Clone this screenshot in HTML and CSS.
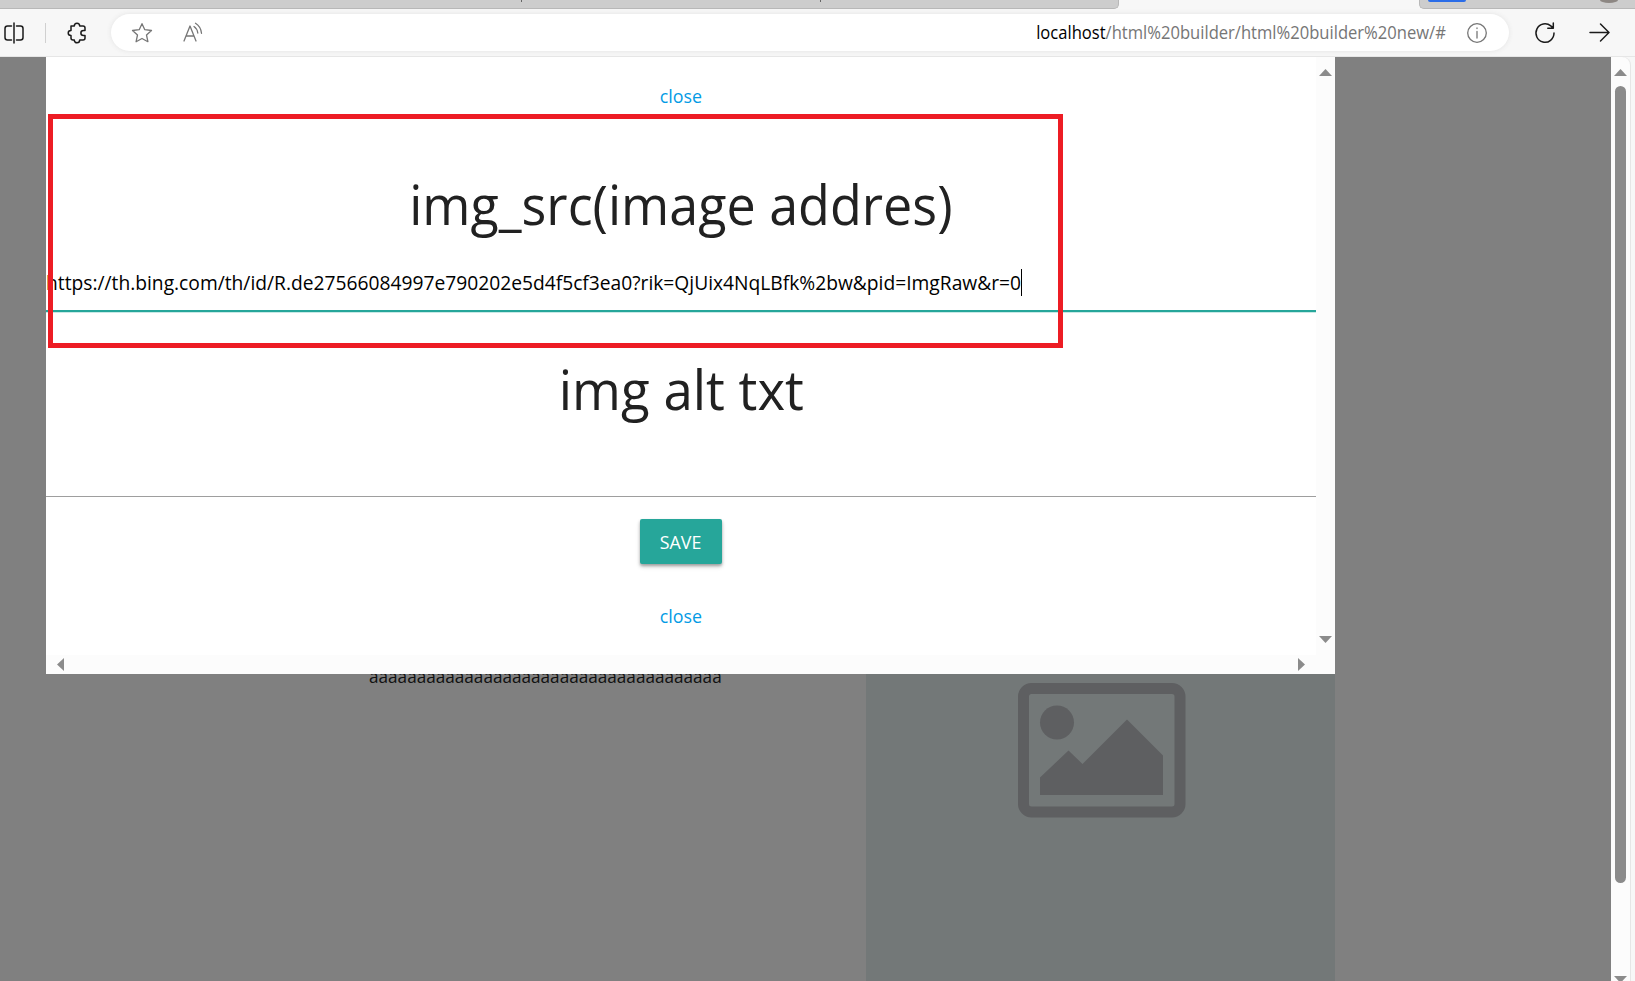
FILE: index.html
```html
<!DOCTYPE html>
<html lang="en">
<head>
<meta charset="utf-8">
<title>html builder</title>
<link rel="stylesheet" href="styles.css">
</head>
<body>
<div class="browser">
  <div class="tabs">
    <div class="tab-group tab-group-left"><i class="tick"></i><i class="tick"></i></div>
    <div class="tab-group tab-group-right"><i class="pill"></i><i class="avatar"></i></div>
  </div>
  <header class="toolbar">
    <svg class="icon split" width="20" height="22" viewBox="0 0 20 22"><path d="M7.5 4H3.5Q1 4 1 6.5v9Q1 18 3.5 18h4M12.500 4h4Q19 4 19 6.500v9q0 2.500-2.500 2.500h-4M10 1v20"/></svg>
    <span class="divider"></span>
    <svg class="icon puzzle" width="20" height="22" viewBox="0 0 20 22"><path d="M4 4H7.300C7.300 .300 12.700 .300 12.700 4H16Q18 4 18 6V8.500H16.500C13 8.500 13 13.500 16.500 13.500H18V16Q18 18 16 18H12.700C12.700 21.700 7.300 21.700 7.300 18H6Q4 18 4 16V13.500C.300 13.500 .300 8.500 4 8.500Z"/></svg>
    <div class="address">
      <svg class="icon muted" width="22" height="22" viewBox="0 0 22 22"><path d="M11 1.700l2.800 6 6.700.8-5 4.500 1.400 6.700-5.900-3.200-5.900 3.200 1.400-6.700-5-4.500 6.700-.8z"/></svg>
      <svg class="icon muted read" width="22" height="22" viewBox="0 0 22 22"><path d="M2 19L8 4l6 15M4.300 14h7.500M12 4.500q3.200 2.200 3.800 6.500M13.500 1.300q5.300 3.200 6 10"/></svg>
      <span class="url"><span class="url-text"><b>localhost</b>/html%20builder/html%20builder%20new/#</span></span>
      <svg class="icon muted" width="22" height="22" viewBox="0 0 22 22"><circle cx="11" cy="11" r="9.300"/><path d="M11 9.500v6.500M11 6v.5"/></svg>
    </div>
    <svg class="icon reload" width="22" height="22" viewBox="0 0 22 22"><path d="M20 11a9 9.300 0 1 1-3.200-7.100l2.200 2.100M19.300 1v5.300h-5.500"/></svg>
    <svg class="icon forward" width="22" height="22" viewBox="0 0 22 22"><path d="M1 10.500h19M11.500 2l8.500 8.500-8.500 8.500"/></svg>
  </header>
  <main class="viewport">
    <div class="page">
      <p class="filler"><span>aaaaaaaaaaaaaaaaaaaaaaaaaaaaaaaaaaaaa</span></p>
      <div class="placeholder">
        <svg width="168" height="135" viewBox="0 0 168 135"><rect x="5.500" y="5.500" width="156.500" height="123.500" rx="8" fill="none" stroke="#5e5f61" stroke-width="11"/><g fill="#5e5f61"><circle cx="39" cy="39.500" r="17"/><path d="M22 94.500L50.500 67.500 64.500 81 109 36.500 145 72.500V112H22z"/></g></svg>
      </div>
    </div>
    <div class="scrollbar">
      <i class="arrow up"></i><i class="thumb"></i><i class="arrow down"></i>
    </div>
    <section class="modal">
      <div class="modal-body">
        <a class="close" href="#"><span>close</span></a>
        <h2 class="title title-src"><span>img_src(image addres)</span></h2>
        <div class="field field-active"><span class="value">https://th.bing.com/th/id/R.de27566084997e790202e5d4f5cf3ea0?rik=QjUix4NqLBfk%2bw&amp;pid=ImgRaw&amp;r=0</span><i class="caret"></i></div>
        <h2 class="title title-alt"><span>img alt txt</span></h2>
        <div class="field"></div>
        <button class="save"><span>SAVE</span></button>
        <a class="close close-bottom" href="#"><span>close</span></a>
      </div>
      <div class="modal-scroll-y"><i class="arrow up"></i><i class="arrow down"></i></div>
      <div class="modal-scroll-x"><i class="arrow left"></i><i class="arrow right"></i></div>
    </section>
    <div class="highlight"></div>
  </main>
</div>
</body>
</html>
```
FILE: styles.css
```css
* { box-sizing: border-box; }
body { margin: 0; overflow: hidden; font-family: "Open Sans", "Noto Sans", sans-serif; background: #f7f7f7; }
.browser { display: flex; flex-direction: column; width: 1635px; height: 981px; overflow: hidden; }

.tabs { display: flex; justify-content: space-between; height: 9px; flex: none; }
.tab-group { background: #cdcdcd; border-bottom: 1px solid #b8b8b8; height: 9px; display: flex; }
.tab-group-left { width: 1119px; border-right: 1px solid #b8b8b8; border-radius: 0 0 5px 0; padding-left: 521px; gap: 298px; }
.tab-group-right { width: 216px; border-left: 1px solid #b8b8b8; border-radius: 0 0 0 5px; padding: 0 17px 0 8px; justify-content: space-between; }
.tick { width: 1px; height: 2px; background: #666; }
.pill { width: 38px; height: 2px; background: #2b6de8; border-radius: 0 0 3px 3px; }
.avatar { width: 18px; height: 3px; background: #8d8783; border-radius: 0 0 9px 9px / 0 0 3px 3px; }

.toolbar { display: flex; align-items: center; height: 48px; flex: none; padding: 0 24px 0 4px; border-bottom: 1px solid #e6e6e6; }
.icon { flex: none; fill: none; stroke: #1b1b1b; stroke-width: 1.5; stroke-linejoin: round; stroke-linecap: round; }
.muted { stroke: #767676; stroke-width: 1.3; }
.divider { width: 1px; height: 20px; margin: 0 21px; background: #d0d0d0; }
.address { display: flex; align-items: center; width: 1398px; height: 37px; margin-left: 24px; padding: 0 21px 0 20px; background: #fff; border-radius: 19px; box-shadow: 0 0 5px #e2e2e2; }
.read { margin-left: 29px; }
.url { flex: 1; display: flex; justify-content: flex-end; margin: 0 20px 2px 0; font-size: 18px; color: #767676; white-space: nowrap; }
.url-text { transform: scaleX(.921); transform-origin: right; }
.url b { font-weight: 400; color: #000; }
.reload { margin-left: 25px; }
.forward { margin-left: 33px; }

.viewport { position: relative; display: flex; flex: 1; padding-right: 5px; overflow: hidden; }
.page { display: flex; flex: 1; background: #808080; padding: 617px 276px 0 369px; }
.filler { width: 497px; margin: -10px 0 0; font-size: 18px; line-height: 25px; color: #111; white-space: nowrap; }
.filler span { display: inline-block; transform: scaleX(.953); transform-origin: left; }
.placeholder { width: 469px; height: 307px; background: #737878; padding: 9px 0 0 152px; }
.scrollbar { display: flex; flex-direction: column; align-items: center; width: 19px; background: #fcfcfc; padding-top: 12px; border-radius: 0 8px 0 0; box-shadow: 1px 0 #e6e6e6; }
.thumb { width: 11px; height: 797px; margin: 10px 0 93px; background: #8b8b8b; border-radius: 6px; flex: none; }
.arrow { width: 13px; height: 7px; flex: none; background: #8b8b8b; }
.up { clip-path: polygon(50% 0, 100% 100%, 0 100%); }
.down { clip-path: polygon(0 0, 100% 0, 50% 100%); }
.left { width: 7px; height: 13px; clip-path: polygon(100% 0, 100% 100%, 0 50%); }
.right { width: 7px; height: 13px; clip-path: polygon(0 0, 100% 50%, 0 100%); }

/* the dialog lies over the dimmed page */
.modal { position: absolute; left: 46px; top: 0; width: 1289px; height: 617px; display: grid; grid-template: 598px 19px / 1270px 19px; background: #fcfcfc; }
.modal-body { display: flex; flex-direction: column; align-items: center; background: #fff; padding-top: 25px; }
.modal-scroll-y { display: flex; flex-direction: column; justify-content: space-between; align-items: center; padding: 12px 0; }
.modal-scroll-x { display: flex; justify-content: space-between; align-items: center; padding: 0 11px; }
.close { font-size: 18.500px; line-height: 28px; color: #039be5; text-decoration: none; }
.close span, .save span, .title span { display: inline-block; transform: scaleX(.964); }
.title { flex: none; margin: 0; font-size: 54px; line-height: 64px; font-weight: 400; color: #212121; white-space: nowrap; }
.title-src { margin-top: 62px; }
.title-alt { margin-top: 45px; }
.title-alt span { transform: scaleX(.978); }
.field { flex: none; display: flex; align-items: center; width: 1270px; height: 56px; margin-top: 20px; border-bottom: 1px solid #9e9e9e; font-size: 20px; color: #000; white-space: nowrap; }
.field-active { height: 58px; margin-top: 18px; border-bottom: 2px solid #26a69a; box-shadow: 0 1px #c9e9e6; }
.value { width: 975px; transform: scaleX(.961); transform-origin: left; }
.caret { width: 1px; height: 27px; background: #000; }
.save { width: 82px; height: 45px; margin-top: 22px; padding: 0; border: 0; border-radius: 2px; background: #26a69a; color: #fff; font: 18.500px "Open Sans", sans-serif; box-shadow: 0 2px 3px rgba(0,0,0,.3), 0 3px 5px rgba(0,0,0,.12); flex: none; }
.close-bottom { margin-top: 38px; }

/* annotation frame drawn over the dialog */
.highlight { position: absolute; left: 48px; top: 57px; width: 1015px; height: 234px; border: 5px solid #ed1c24; }
```
